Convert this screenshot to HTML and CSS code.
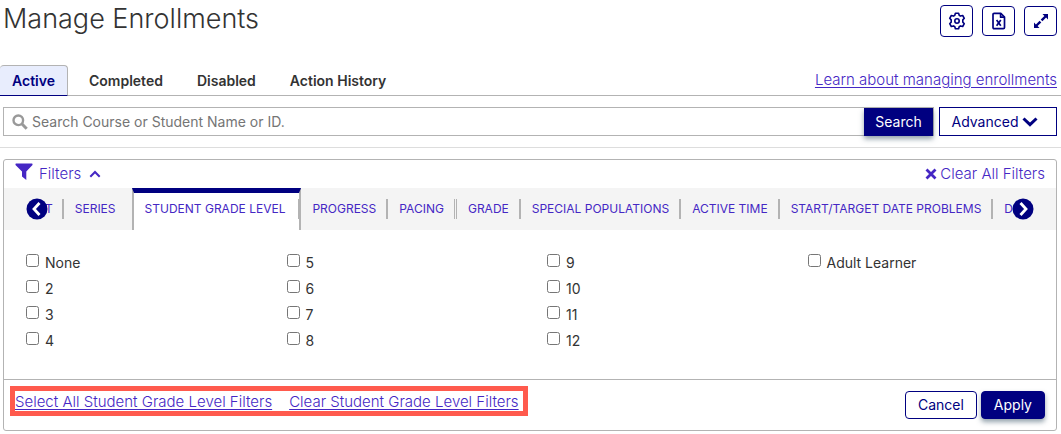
FILE: index.html
```html
<!DOCTYPE html>
<html lang="en">
<head>
<meta charset="utf-8">
<title>Manage Enrollments</title>
<link rel="stylesheet" href="styles.css">
</head>
<body>
<header class="page-header">
  <h1 class="title">Manage Enrollments</h1>
  <div class="tools">
    <button class="tool tool-large" type="button" aria-label="Settings">
      <svg width="18" height="18" viewBox="0 0 18 18" fill="none" stroke="currentColor" stroke-width="1.6" stroke-linejoin="round"><path d="M7.400 1.200h3.200l.6 2.100 1.300.8 2.200-.6 1.600 2.800-1.500 1.600v2.200l1.500 1.600-1.600 2.800-2.200-.6-1.300.8-.6 2.100H7.400l-.6-2.100-1.300-.8-2.200.6-1.600-2.800 1.500-1.600V7.900L1.700 6.300l1.600-2.800 2.200.6 1.300-.8z"/><circle cx="9" cy="9" r="2.200"/></svg>
    </button>
    <button class="tool" type="button" aria-label="Export to spreadsheet">
      <svg width="14" height="18" viewBox="0 0 14 18" fill="none" stroke="currentColor" stroke-width="1.700" stroke-linejoin="round"><path d="M2.200 1.300h6.600l3.700 3.700v10.500q0 1.200-1.200 1.200H2.200Q1 16.700 1 15.500v-13Q1 1.300 2.200 1.300z"/><path d="M8.600 1.500v3.700h3.700M4.600 8l4.200 5.800M8.800 8l-4.200 5.800"/></svg>
    </button>
    <button class="tool" type="button" aria-label="Expand">
      <svg width="18" height="18" viewBox="0 0 18 18"><path fill="currentColor" d="M10.500 2H16v5.500l-1.900-1.900-3.700 3.700-1.700-1.700 3.700-3.700zM7.500 16H2v-5.500l1.900 1.900 3.700-3.700 1.700 1.700-3.700 3.700z"/></svg>
    </button>
  </div>
</header>

<div class="tab-bar">
  <nav class="tabs">
    <a class="tab tab-active" href="#">Active</a>
    <a class="tab" href="#">Completed</a>
    <a class="tab" href="#">Disabled</a>
    <a class="tab" href="#">Action History</a>
  </nav>
  <a class="link" href="#">Learn about managing enrollments</a>
</div>

<form class="search-row">
  <div class="search-box">
    <svg class="search-icon" width="16" height="16" viewBox="0 0 16 16" fill="none" stroke="currentColor"><circle cx="6.300" cy="6.300" r="4.800" stroke-width="2.400"/><path d="M10 10l4.700 4.700" stroke-width="3"/></svg>
    <input class="search-input" type="text" aria-label="Search" placeholder="Search Course or Student Name or ID.">
    <button class="search-button" type="button">Search</button>
  </div>
  <button class="advanced" type="button">Advanced
    <svg width="16" height="10" viewBox="0 0 16 10" fill="none" stroke="currentColor" stroke-width="3"><path d="M1.500 1.500L8 7.700l6.500-6.200"/></svg>
  </button>
</form>

<section class="panel">
  <div class="panel-head">
    <button class="plain filters" type="button">
      <svg width="18" height="18" viewBox="0 0 18 18"><path fill="currentColor" d="M.5 1Q.5.500 1 .5h16q.5 0 .5.500v1L11.300 8.500V17L7 13.500v-5L.5 2z"/></svg>
      <span>Filters</span>
      <svg class="caret" width="12" height="8" viewBox="0 0 12 8" fill="none" stroke="currentColor" stroke-width="2"><path d="M1.300 6.800L6 2l4.700 4.800"/></svg>
    </button>
    <button class="plain clear" type="button">
      <svg width="12" height="12" viewBox="0 0 12 12" fill="none" stroke="currentColor" stroke-width="2.800"><path d="M1.500 1.500l9 9M10.500 1.500l-9 9"/></svg>
      Clear All Filters
    </button>
  </div>

  <div class="strip">
    <div class="strip-items">
      <a class="filter" href="#">T</a>
      <a class="filter filter-before" href="#">SERIES</a>
      <a class="filter filter-active" href="#"><span class="filter-label">STUDENT GRADE LEVEL</span></a>
      <a class="filter" href="#">PROGRESS</a>
      <a class="filter filter-split" href="#">PACING</a>
      <a class="filter" href="#">GRADE</a>
      <a class="filter" href="#">SPECIAL POPULATIONS</a>
      <a class="filter" href="#">ACTIVE TIME</a>
      <a class="filter" href="#">START/TARGET DATE PROBLEMS</a>
      <a class="filter" href="#">D</a>
    </div>
    <button class="arrow arrow-prev" type="button" aria-label="Previous filters">
      <svg width="22" height="22" viewBox="0 0 22 22" fill="none"><circle cx="11" cy="11" r="10.500" fill="currentColor"/><path d="M13.500 5L8 11l5.500 6" stroke="#fff" stroke-width="2.800"/></svg>
    </button>
    <button class="arrow arrow-next" type="button" aria-label="Next filters">
      <svg width="22" height="22" viewBox="0 0 22 22" fill="none"><circle cx="11" cy="11" r="10.500" fill="currentColor"/><path d="M8.500 5l5.500 6-5.500 6" stroke="#fff" stroke-width="2.800"/></svg>
    </button>
  </div>

  <div class="levels">
    <div class="level-column">
      <label class="level"><input class="check" type="checkbox">None</label>
      <label class="level"><input class="check" type="checkbox">2</label>
      <label class="level"><input class="check" type="checkbox">3</label>
      <label class="level"><input class="check" type="checkbox">4</label>
    </div>
    <div class="level-column">
      <label class="level"><input class="check" type="checkbox">5</label>
      <label class="level"><input class="check" type="checkbox">6</label>
      <label class="level"><input class="check" type="checkbox">7</label>
      <label class="level"><input class="check" type="checkbox">8</label>
    </div>
    <div class="level-column">
      <label class="level"><input class="check" type="checkbox">9</label>
      <label class="level"><input class="check" type="checkbox">10</label>
      <label class="level"><input class="check" type="checkbox">11</label>
      <label class="level"><input class="check" type="checkbox">12</label>
    </div>
    <div class="level-column">
      <label class="level"><input class="check" type="checkbox">Adult Learner</label>
    </div>
  </div>

  <footer class="panel-foot">
    <div class="highlight">
      <a class="link" href="#">Select All Student Grade Level Filters</a>
      <a class="link" href="#">Clear Student Grade Level Filters</a>
    </div>
    <div class="actions">
      <button class="action" type="button">Cancel</button>
      <button class="action action-primary" type="button">Apply</button>
    </div>
  </footer>
</section>
</body>
</html>
```
FILE: styles.css
```css
:root {
  --navy: #000080;
  --violet: #4527c4;
  --line: #b3b3b3;
}

* { box-sizing: border-box; }

body {
  margin: 0;
  background: #fff;
  color: #333;
  font: 14px/20px Inter, "Liberation Sans", sans-serif;
}

button, input { font: inherit; }
button { cursor: pointer; }
svg { display: block; flex: none; }
a { color: inherit; text-decoration: none; }

.page-header {
  display: flex;
  justify-content: space-between;
  align-items: flex-start;
  padding: 0 4px 0 3px;
  height: 65px;
}

.title {
  margin: 0;
  padding-top: 2px;
  font-size: 27px;
  line-height: 34px;
  font-weight: 300;
}

.tools {
  display: flex;
  align-items: center;
  gap: 9px;
  padding-top: 5px;
}

.tool {
  display: flex;
  align-items: center;
  justify-content: center;
  width: 33px;
  height: 30px;
  padding: 0;
  border: 1px solid var(--navy);
  border-radius: 4px;
  background: #fff;
  color: var(--navy);
}

.tool-large { height: 32px; }

.tab-bar {
  display: flex;
  justify-content: space-between;
  align-items: center;
  padding-right: 4px;
  border-bottom: 1px solid var(--line);
}

.tabs {
  display: flex;
  gap: 9px;
  margin-bottom: -1px;
}

.tab {
  padding: 5px 12px 4px;
  border: 1px solid transparent;
  border-left: 0;
  border-radius: 4px 4px 0 0;
  font-weight: 600;
}

.tab-active {
  border-color: var(--line);
  border-bottom-color: var(--navy);
  background: #e8edfd;
  color: var(--navy);
}

.link {
  color: var(--violet);
  font-size: 15px;
  font-weight: 300;
  text-decoration: underline;
  text-underline-offset: 2px;
}

.search-row {
  display: flex;
  gap: 5px;
  padding: 11px 4px 11px 3px;
  border-bottom: 1px solid #ddd;
}

.search-box {
  display: flex;
  align-items: center;
  flex: 1;
  height: 29px;
  padding-left: 8px;
  border: 1px solid var(--line);
}

.search-icon { color: #999; }

.search-input {
  flex: 1;
  min-width: 0;
  padding: 0 4px;
  border: 0;
  outline: 0;
  background: none;
  color: #333;
}

.search-input::placeholder { color: #757575; }

.search-button {
  width: 69px;
  height: 28px;
  padding: 0;
  border: 0;
  background: var(--navy);
  color: #fff;
  box-shadow: 0 3px 5px rgba(40, 70, 90, 0.5);
}

.advanced {
  display: flex;
  align-items: center;
  justify-content: center;
  gap: 4px;
  width: 118px;
  height: 29px;
  padding: 0 6px 0 0;
  border: 1px solid var(--navy);
  background: #fff;
  color: var(--navy);
}

.panel {
  margin: 11px 4px 3px 3px;
  border: 1px solid var(--line);
  border-radius: 3px;
}

.panel-head {
  display: flex;
  justify-content: space-between;
  padding: 0 11px;
  height: 28px;
}

.plain {
  display: flex;
  align-items: center;
  padding: 0;
  border: 0;
  background: none;
  color: var(--violet);
  font-size: 15px;
  font-weight: 300;
}

.filters { gap: 6px; }
.filters > svg:first-child { margin-bottom: 4px; }
.filters .caret { margin-left: 2px; }
.clear { gap: 3px; }

.strip {
  position: relative;
  height: 42px;
  background: #f4f4f4;
  color: var(--violet);
  font-size: 12px;
}

.strip-items {
  display: flex;
  align-items: center;
  height: 42px;
  padding-left: 30px;
  overflow: hidden;
}

.filter {
  flex: none;
  padding: 0 10px 0 11px;
  border-right: 2px solid var(--line);
}

.filter:first-child { padding-right: 9px; }
.filter:last-child { border-right: 0; }

.filter-before {
  padding-right: 16px;
  border-right: 0;
}

.filter-split { border-right: 3px double var(--line); }

.filter-active {
  display: flex;
  align-items: center;
  align-self: stretch;
  padding: 0 0 5px 11px;
  border: solid var(--line);
  border-width: 5px 2px 0;
  border-top-color: var(--navy);
  background: #fff;
}

.filter-label {
  padding-right: 13px;
  border-right: 1px solid var(--line);
}

.arrow {
  position: absolute;
  top: 10px;
  padding: 0;
  border: 0;
  border-radius: 50%;
  background: none;
  color: var(--navy);
}

.arrow-prev { left: 22px; }
.arrow-next { right: 22px; }

.levels {
  display: grid;
  grid-template-columns: repeat(4, 1fr);
  padding: 20px 0 25px 22px;
  margin-right: -12px;
}

.level {
  display: flex;
  align-items: center;
  gap: 6px;
  height: 26px;
}

.check {
  width: 13px;
  height: 13px;
  margin: 0 0 5px;
}

.panel-foot {
  display: flex;
  justify-content: space-between;
  align-items: flex-start;
  padding: 6px 11px 11px 6px;
  border-top: 1px solid var(--line);
}

.highlight {
  display: flex;
  align-items: center;
  gap: 17px;
  height: 30px;
  padding: 1px 4px 0 0;
  border: 5px solid #ff5a4d;
}

.actions {
  display: flex;
  gap: 4px;
  padding-top: 5px;
}

.action {
  height: 28px;
  padding: 0 12px;
  border: 1px solid var(--navy);
  border-radius: 4px;
  background: #fff;
  color: var(--navy);
}

.action-primary {
  background: var(--navy);
  color: #fff;
  box-shadow: 0 3px 5px rgba(40, 70, 90, 0.5);
}
```
